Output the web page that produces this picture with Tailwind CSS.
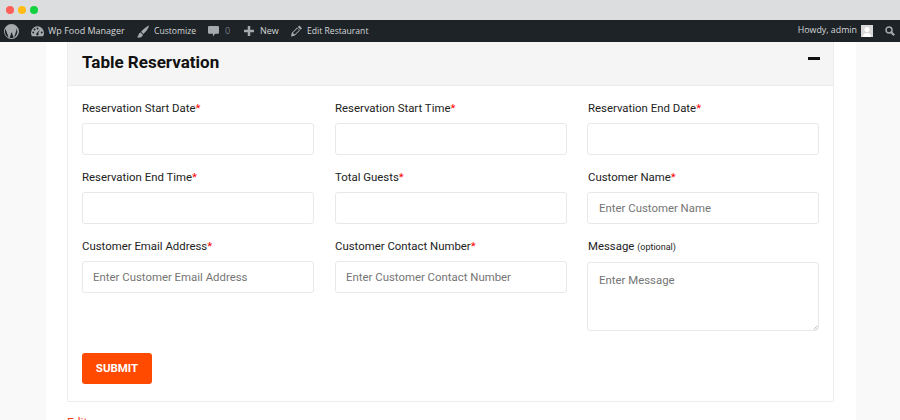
<!DOCTYPE html>
<html lang="en">
<head>
    <meta charset="UTF-8" />
    <script src="https://cdn.jsdelivr.net/npm/@tailwindcss/browser@4"></script>
    <title>Table Reservation</title>
</head>
<body class="h-[420px] overflow-hidden bg-[#f9f9f9] font-['Roboto',sans-serif]">
    <!-- browser chrome -->
    <div class="h-5 bg-[#dcdddf] flex items-center gap-1 pl-[6px]">
        <span class="w-2 h-2 rounded-full bg-[#ff5f57]"></span>
        <span class="w-2 h-2 rounded-full bg-[#ffbd14]"></span>
        <span class="w-2 h-2 rounded-full bg-[#14d13f]"></span>
    </div>

    <!-- admin bar -->
    <div class="h-[22px] bg-[#1d2327] text-[#d5d7d9] text-[9px] flex items-center justify-between font-['Open_Sans',sans-serif]">
        <div class="flex items-center">
            <svg class="w-[15px] h-[15px] ml-[4px] mr-[12px]" viewBox="0 0 20 20" fill="#a7aaad"><path d="M10 0a10 10 0 1 0 0 20 10 10 0 0 0 0-20zM1.200 10c0-1.300.3-2.500.8-3.600l4.200 11.500A8.800 8.800 0 0 1 1.200 10zm8.800 8.800c-.9 0-1.700-.1-2.500-.4l2.600-7.700 2.700 7.400v.1c-.9.4-1.800.6-2.800.6zm1.200-13l3.200 9.400.9-3c.4-1.200.7-2.100.7-2.800 0-1.100-.4-1.800-.7-2.400-.4-.7-.8-1.300-.8-2 0-.8.6-1.500 1.400-1.500h.1A8.800 8.800 0 0 0 2.700 5.100h.6c.9 0 2.400-.1 2.400-.1.500 0 .5.700.1.800 0 0-.5.100-1 .1l3.200 9.500 1.900-5.800-1.400-3.700c-.5 0-.9-.1-.9-.1-.5 0-.4-.8 0-.8 0 0 1.500.1 2.400.1.900 0 2.400-.1 2.400-.1.500 0 .5.700.1.800 0 0-.5.100-1 .1zm5.600-.2c.6 1.200 1 2.700 1 4.400a8.800 8.800 0 0 1-4.400 7.600l2.700-7.800c.5-1.300.7-2.300.7-3.200 0-.3 0-.7-.1-1z"/></svg>
            <svg class="w-[13px] h-[13px] mr-[4px]" viewBox="0 0 20 20" fill="#a7aaad"><path d="M10 2A10 10 0 0 0 0 12c0 2 .5 3.700 1.400 5.200h17.200A10 10 0 0 0 20 12 10 10 0 0 0 10 2zm0 2a1.500 1.500 0 1 1 0 3 1.500 1.500 0 0 1 0-3zM3.500 13a1.500 1.500 0 1 1 0-3 1.500 1.500 0 0 1 0 3zm2-4.500a1.500 1.500 0 1 1 0-3 1.500 1.500 0 0 1 0 3zM10 16a2 2 0 0 1-1-3.700L14 7l-3 5.800A2 2 0 0 1 10 16zm6.500-3a1.500 1.500 0 1 1 0-3 1.500 1.500 0 0 1 0 3z"/></svg>
            <span class="mr-[12px] w-[77px] whitespace-nowrap">Wp Food Manager</span>
            <svg class="w-[12px] h-[13px] mr-[5px]" viewBox="0 0 20 20" fill="#a7aaad"><path d="M20 0c-2 .5-10 6-13 10.500l3.500 3.500C15 11 20 3 20 0zM6 11.500C3.500 12 3 14 2.500 16 2.200 17.500 1 18.500 0 19.500c3.500 1 9 .5 9.800-4.200z"/></svg>
            <span class="mr-[12px] w-[42px] text-[8.6px]">Customize</span>
            <svg class="w-[11px] h-[12px] mr-[6px]" viewBox="0 0 20 20" fill="#a7aaad"><path d="M2 1h16a2 2 0 0 1 2 2v10a2 2 0 0 1-2 2h-5l-4 5v-5H2a2 2 0 0 1-2-2V3a2 2 0 0 1 2-2z"/></svg>
            <span class="mr-[14px] w-[5px] text-[#787c82]">0</span>
            <svg class="w-[10px] h-[10px] mr-[6px]" viewBox="0 0 20 20" fill="#a7aaad"><path d="M7.500 0h5v7.500H20v5h-7.500V20h-5v-7.500H0v-5h7.500z"/></svg>
            <span class="mr-[13px] w-[18px]">New</span>
            <svg class="w-[11px] h-[12px] mr-[5px]" viewBox="0 0 20 20" fill="#a7aaad"><path d="M15 0l5 5-2.500 2.500-5-5zM11 3.800l5.200 5.200L6.500 18.800 0 20l1.200-6.500zM3.500 13.500l3 3 8-8-3-3z" fill-rule="evenodd"/></svg>
            <span class="text-[8.6px]">Edit Restaurant</span>
        </div>
        <div class="flex items-center">
            <span class="mr-[4px] text-[8.85px]">Howdy, admin</span>
            <span class="w-3 h-3 bg-[#d8d8d8] mr-[12px] overflow-hidden">
                <svg class="w-3 h-3" viewBox="0 0 12 12" fill="#fff"><circle cx="6" cy="4.500" r="2.500"/><path d="M2 12c0-3 1.500-4 4-4s4 1 4 4z"/></svg>
            </span>
            <svg class="w-[10px] h-[10px] mr-[5px]" viewBox="0 0 12 12" fill="none" stroke="#a7aaad"><circle cx="4.800" cy="4.800" r="3.600" stroke-width="1.800"/><path d="M7.500 7.500L11 11" stroke-width="2.600"/></svg>
        </div>
    </div>

    <!-- page column -->
    <div class="ml-[46px] w-[810px] h-[378px] bg-white px-[21px] overflow-hidden">
        <div class="w-[767px] h-[360px] border border-t-0 border-[#ececec] rounded-b-[2px]">
            <div class="h-[44px] bg-[#f5f5f5] border-b border-[#ececec] flex justify-between pl-[14px] pr-[13px]">
                <h2 class="text-[17px] leading-[41px] font-bold text-[#111]">Table Reservation</h2>
                <span class="w-3 h-[3px] bg-[#111] mt-[15px]"></span>
            </div>
            <form class="pt-[14px] pl-[14px]">
                <div class="grid grid-cols-[253px_252px_232px] text-[11.4px] text-[#222]">
                    <div class="h-[69px]">
                        <label class="block leading-[17px] mb-[6px]">Reservation Start Date<span class="text-[#f00]">*</span></label>
                        <input class="block w-[232px] h-[32px] border border-[#e8e8e8] rounded-[3px] px-[10px]" />
                    </div>
                    <div class="h-[69px]">
                        <label class="block leading-[17px] mb-[6px]">Reservation Start Time<span class="text-[#f00]">*</span></label>
                        <input class="block w-[232px] h-[32px] border border-[#e8e8e8] rounded-[3px] px-[10px]" />
                    </div>
                    <div class="h-[69px]">
                        <label class="block leading-[17px] mb-[6px] pl-px">Reservation End Date<span class="text-[#f00]">*</span></label>
                        <input class="block w-[232px] h-[32px] border border-[#e8e8e8] rounded-[3px] px-[10px]" />
                    </div>
                    <div class="h-[69px]">
                        <label class="block leading-[17px] mb-[6px]">Reservation End Time<span class="text-[#f00]">*</span></label>
                        <input class="block w-[232px] h-[32px] border border-[#e8e8e8] rounded-[3px] px-[10px]" />
                    </div>
                    <div class="h-[69px]">
                        <label class="block leading-[17px] mb-[6px]">Total Guests<span class="text-[#f00]">*</span></label>
                        <input class="block w-[232px] h-[32px] border border-[#e8e8e8] rounded-[3px] px-[10px]" />
                    </div>
                    <div class="h-[69px]">
                        <label class="block leading-[17px] mb-[6px] pl-px">Customer Name<span class="text-[#f00]">*</span></label>
                        <input class="block w-[232px] h-[32px] border border-[#e8e8e8] rounded-[3px] px-[11px] placeholder:text-[#757575]" placeholder="Enter Customer Name" />
                    </div>
                    <div>
                        <label class="block leading-[17px] mb-[6px]">Customer Email Address<span class="text-[#f00]">*</span></label>
                        <input class="block w-[232px] h-[32px] border border-[#e8e8e8] rounded-[3px] px-[10px] placeholder:text-[#757575]" placeholder="Enter Customer Email Address" />
                    </div>
                    <div>
                        <label class="block leading-[17px] mb-[6px]">Customer Contact Number<span class="text-[#f00]">*</span></label>
                        <input class="block w-[232px] h-[32px] border border-[#e8e8e8] rounded-[3px] px-[10px] placeholder:text-[#757575]" placeholder="Enter Customer Contact Number" />
                    </div>
                    <div>
                        <label class="block h-[17px] leading-[17px] mb-[7px] pl-px">Message <small class="text-[9px]">(optional)</small></label>
                        <div class="relative w-[232px] h-[69px]">
                            <textarea class="block w-full h-full resize-none border border-[#e8e8e8] rounded-[3px] px-[11px] py-[9px] placeholder:text-[#757575]" placeholder="Enter Message"></textarea>
                            <svg class="absolute right-[1px] bottom-[1px] w-[5px] h-[5px]" viewBox="0 0 5 5" stroke="#999" stroke-width="0.6"><path d="M0.500 4.500L4.500 0.500M2.500 4.500L4.500 2.500"/></svg>
                        </div>
                    </div>
                </div>
                <button type="button" class="block mt-[22px] w-[70px] h-[31px] bg-[#ff4a00] rounded-[3px] text-white text-[11.5px] font-bold">SUBMIT</button>
            </form>
        </div>
        <a class="block mt-[12px] text-[12px] text-[#ff3b1a]">Edit</a>
    </div>
</body>
</html>
